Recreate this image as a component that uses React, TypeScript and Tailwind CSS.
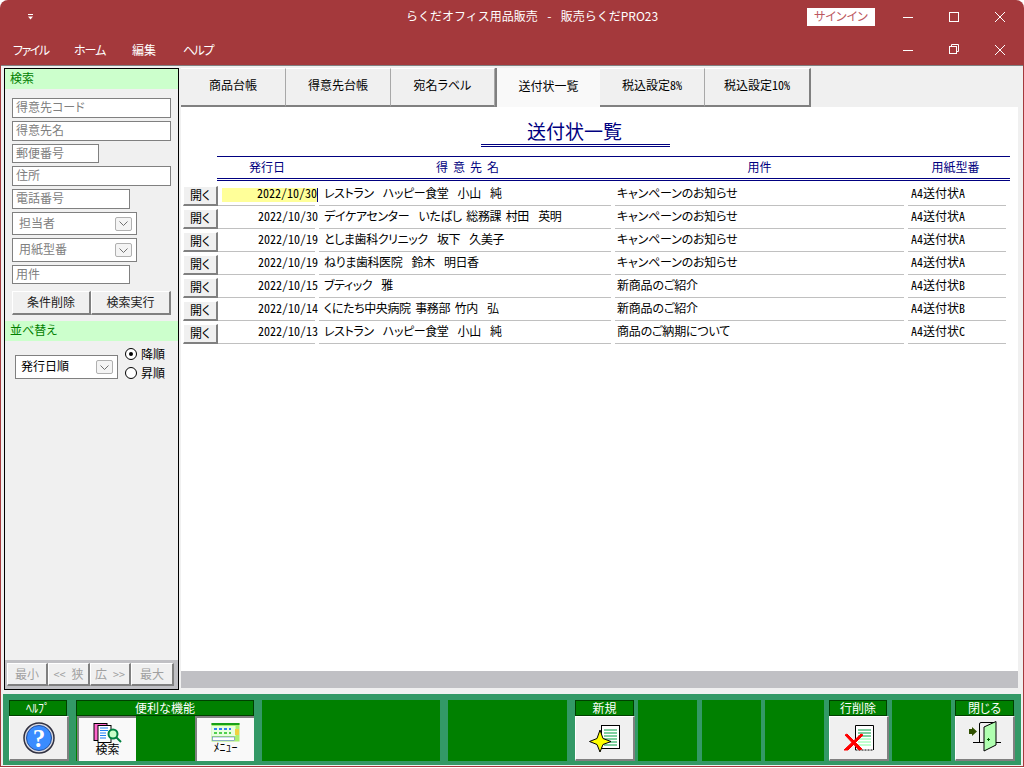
import React from "react";

const rows = [
  { date: "2022/10/30", name: "レストラン  ハッピー食堂  小山  純", subject: "キャンペーンのお知らせ", paper: "A4送付状A" },
  { date: "2022/10/30", name: "デイケアセンター  いたばし 総務課 村田  英明", subject: "キャンペーンのお知らせ", paper: "A4送付状A" },
  { date: "2022/10/19", name: "としま歯科クリニック  坂下  久美子", subject: "キャンペーンのお知らせ", paper: "A4送付状A" },
  { date: "2022/10/19", name: "ねりま歯科医院  鈴木  明日香", subject: "キャンペーンのお知らせ", paper: "A4送付状A" },
  { date: "2022/10/15", name: "ブティック  雅", subject: "新商品のご紹介", paper: "A4送付状B" },
  { date: "2022/10/14", name: "くにたち中央病院 事務部 竹内  弘", subject: "新商品のご紹介", paper: "A4送付状B" },
  { date: "2022/10/13", name: "レストラン  ハッピー食堂  小山  純", subject: "商品のご納期について", paper: "A4送付状C" },
];

const tabs = [
  { label: "商品台帳", width: "w-[105px]" },
  { label: "得意先台帳", width: "w-[105px]" },
  { label: "宛名ラベル", width: "w-[104px]" },
  { label: "送付状一覧", width: "w-[105px]", active: true },
  { label: "税込設定8%", width: "w-[105px]" },
  { label: "税込設定10%", width: "w-[106px]", last: true },
];

const bevel = "bg-[#f0f0f0] border-t border-l border-t-white border-l-white border-r-2 border-b-2 border-r-[#808080] border-b-[#808080]";

const TextField = ({ label, width, h = "h-[20px]", mt = "mt-[3px]" }: { label: string; width: string; h?: string; mt?: string }) => (
  <div className={`${width} ${h} ${mt} bg-white border border-[#808080] pl-[3px] text-[12px] leading-[16px] text-[#808080]`}>{label}</div>
);

const Chevron = () => (
  <span className="flex h-[14px] w-[17px] items-center justify-center rounded-[2px] border border-[#b0b0b0] bg-[#f4f4f4]">
    <svg width="9" height="5" viewBox="0 0 9 5" fill="none" stroke="#707070">
      <path d="M0.5 0.5 L4.5 4.5 L8.5 0.5" />
    </svg>
  </span>
);

const Combo = ({ label, h }: { label: string; h: string }) => (
  <div className={`mt-[3px] flex ${h} w-[125px] items-center justify-between border border-[#808080] bg-white pl-[6px] pr-[4px] text-[12px] text-[#808080]`}>
    <span className="pb-[2px]">{label}</span>
    <Chevron />
  </div>
);

const WinButtons = ({ restored }: { restored?: boolean }) => (
  <div className="flex items-center">
    <svg width="46" height="12" viewBox="0 0 46 12" stroke="#fff" fill="none"><path d="M20 6.5 H30" /></svg>
    <svg width="46" height="12" viewBox="0 0 46 12" stroke="#fff" fill="none">
      {restored ? (
        <>
          <rect x="20.5" y="2.5" width="7" height="7" />
          <path d="M22.5 2.5 V0.5 H29.5 V7.5 H27.5" />
        </>
      ) : (
        <rect x="20.5" y="1.5" width="9" height="9" />
      )}
    </svg>
    <svg width="46" height="12" viewBox="0 0 46 12" stroke="#fff" fill="none"><path d="M20 1 L30 11 M30 1 L20 11" /></svg>
  </div>
);

const HelpIcon = () => (
  <svg width="32" height="32" viewBox="0 0 32 32">
    <circle cx="16" cy="16" r="15" fill="#d8d8e0" stroke="#303040" strokeWidth="1.5" />
    <circle cx="16" cy="16" r="12.5" fill="#3a8cff" stroke="#2050a0" />
    <text x="16" y="25" textAnchor="middle" fontSize="25" fontWeight="700" fill="#fff" fontFamily="Liberation Serif, serif">?</text>
  </svg>
);

const SearchIcon = () => (
  <svg width="30" height="21" viewBox="0 0 30 21">
    <rect x="1" y="0.5" width="13" height="17" fill="#ff66cc" stroke="#000" />
    <rect x="5" y="2.5" width="13" height="17" fill="#fff" stroke="#000" />
    <path d="M7 5 H15 M7 7.5 H15 M7 10 H13 M7 12.5 H13 M7 15 H13" stroke="#2080f0" strokeWidth="1.2" />
    <circle cx="20" cy="11" r="4.5" fill="#c8ffc8" stroke="#008040" strokeWidth="2" />
    <path d="M23.5 14.5 L28 19" stroke="#008040" strokeWidth="2" />
  </svg>
);

const MenuIcon = () => (
  <svg width="29" height="19" viewBox="0 0 29 19">
    <rect x="0.5" y="0" width="28" height="18.5" fill="#a8f070" />
    <rect x="0.5" y="0" width="28" height="2" fill="#18a018" />
    <rect x="0.5" y="3" width="24" height="10" fill="#e8ffe0" />
    <path d="M3 6 H20" stroke="#3080f0" strokeWidth="2" strokeDasharray="3 2" />
    <path d="M3 10 H20" stroke="#50d050" strokeWidth="2" strokeDasharray="3 2" />
    <rect x="24" y="6" width="4" height="6" fill="#f0d040" />
    <rect x="1.5" y="14" width="22" height="3.5" fill="#fff" stroke="#4060d0" strokeWidth="0.5" />
  </svg>
);

const NewIcon = () => (
  <svg width="32" height="27" viewBox="0 0 32 27">
    <rect x="12.5" y="0.5" width="18" height="23" fill="#fff" stroke="#000" />
    <path d="M15 5 H28 M15 8 H28 M15 11 H28 M15 14 H28 M15 17 H28 M15 20 H28" stroke="#00a040" strokeWidth="1" />
    <path d="M11 5 L14 13.5 L22 16.5 L14 19.5 L11 27 L8 19.5 L0.5 16.5 L8 13.5 Z" fill="#ffff00" stroke="#000" />
  </svg>
);

const DeleteIcon = () => (
  <svg width="32" height="26" viewBox="0 0 32 26">
    <path d="M12.5 25 V0.5 H30.5 V25" fill="#fff" stroke="#000" />
    <path d="M12.5 25 H30.5" stroke="#000" strokeDasharray="2 1" />
    <path d="M15 5 H28 M15 8 H28 M15 11 H28" stroke="#00a040" />
    <path d="M15 14 H28 M15 17 H28 M15 20 H28" stroke="#80ffa0" />
    <path d="M1 25 L18 9 L20 10 L5 25 Z M4 9 L19 24 L16 25 L2 10 Z" fill="#ff0000" stroke="#ff0000" />
  </svg>
);

const ExitIcon = () => (
  <svg className="-mt-[3px]" width="33" height="31" viewBox="0 0 33 31">
    <path d="M1 8 H4 V6 L9 10.5 L4 15 V13 H1 Z" fill="#305000" />
    <path d="M5 21.5 H33" stroke="#000" />
    <path d="M11.5 21 V3 Q11.5 1.5 13 1.5 H27" fill="none" stroke="#000" />
    <path d="M16 6 L28 0.5 V24 L16 30 Z" fill="#b0ffb0" stroke="#000" />
    <path d="M19 18.5 H22 M20.5 17 V20" stroke="#006000" />
  </svg>
);

const Cell = ({ width, mr, title, children }: { width: string; mr: string; title?: string; children?: React.ReactNode }) => (
  <div className={`${width} ${mr} flex h-[61px] flex-col bg-[#008000]`}>
    {title && (
      <div className="h-[16px] shrink-0 border border-[#004000] text-center text-[12px] leading-[13px] text-white">{title}</div>
    )}
    {children}
  </div>
);

const ActionButton = ({ children }: { children: React.ReactNode }) => (
  <div className={`${bevel} flex h-[46px] w-[60px] items-center justify-center`}>{children}</div>
);

const FeatureButton = ({ label, children }: { label: string; children: React.ReactNode }) => (
  <div className="flex h-[45px] w-[59px] flex-col items-center border-t-2 border-l-2 border-t-[#808080] border-l-[#808080] bg-[#f9f9f9] pt-[5px]">
    {children}
    <span className="-mt-[1px] text-[12px] leading-[12px] text-black">{label}</span>
  </div>
);

export default function App() {
  return (
    <div className="flex h-[768px] w-[1024px] flex-col overflow-hidden bg-white font-['Noto_Sans_CJK_JP',sans-serif] [font-feature-settings:'hwid','palt'] text-black">
      <div className="flex h-[767px] flex-col rounded-t-[8px] bg-[#a4393c] px-[1px] pb-[1px]">
        <div className="flex h-[33px] shrink-0 items-center text-[12px] text-white">
          <svg className="ml-[27px]" width="6" height="6" viewBox="0 0 6 6" fill="#fff">
            <rect x="0" y="0" width="5" height="1" />
            <path d="M0 2.5 H5 L2.5 5.5 Z" />
          </svg>
          <span className="ml-[372px] w-[401px] whitespace-pre pb-[1px] [font-feature-settings:normal] [word-spacing:2px]">らくだオフィス用品販売  -  販売らくだPRO23</span>
          <span className="flex h-[18px] w-[68px] items-center justify-center bg-white pb-[1px] text-[12px] text-[#bc5860]">サインイン</span>
          <div className="ml-[8px]"><WinButtons /></div>
        </div>
        <div className="flex h-[32px] shrink-0 items-center pt-[1px] text-[12px] text-white">
          <span className="ml-[12px] w-[61px] tracking-[-1.5px]">ファイル</span>
          <span className="w-[58px] tracking-[-1px]">ホーム</span>
          <span className="w-[51px]">編集</span>
          <span className="w-[700px] tracking-[-1.5px]">ヘルプ</span>
          <WinButtons restored />
        </div>
        <div className="flex min-h-0 flex-1 flex-col border-t border-t-[#808080] bg-[#f0f0f0] pl-[2px] pr-[2px]">
          <div className="mt-[2px] flex h-[622px] shrink-0">
            {/* left search panel */}
            <div className="ml-[1px] flex h-[622px] w-[175px] shrink-0 flex-col border border-black bg-[#f0f0f0]">
              <div className="h-[20px] bg-[#ccffcc] pl-[5px] text-[12px] leading-[17px] text-[#008000]">検索</div>
              <div className="flex flex-col pl-[7px]">
                <TextField label="得意先コード" width="w-[159px]" mt="mt-[9px]" />
                <TextField label="得意先名" width="w-[159px]" />
                <TextField label="郵便番号" width="w-[87px]" h="h-[19px]" />
                <TextField label="住所" width="w-[159px]" />
                <TextField label="電話番号" width="w-[118px]" />
                <Combo label="担当者" h="h-[23px]" />
                <Combo label="用紙型番" h="h-[24px]" />
                <TextField label="用件" width="w-[118px]" h="h-[19px]" />
                <div className="mt-[7px] flex text-[12px] text-[#202020]">
                  <div className={`${bevel} flex h-[24px] w-[79px] items-center justify-center pb-[2px]`}>条件削除</div>
                  <div className={`${bevel} flex h-[24px] w-[80px] items-center justify-center pb-[2px]`}>検索実行</div>
                </div>
              </div>
              <div className="mt-[6px] h-[20px] bg-[#ccffcc] pl-[5px] text-[12px] leading-[17px] text-[#008000]">並べ替え</div>
              <div className="flex pl-[10px] pt-[5px]">
                <div className="mt-[9px] flex h-[24px] w-[103px] items-center justify-between border border-[#808080] bg-white pl-[5px] pr-[4px] text-[12px] text-black">
                  <span className="pb-[2px]">発行日順</span>
                  <Chevron />
                </div>
                <div className="ml-[7px] flex flex-col gap-[3px] text-[12px] leading-[16px]">
                  <div className="flex items-center gap-[4px]">
                    <span className="flex h-[12px] w-[12px] items-center justify-center rounded-full border border-black bg-white">
                      <span className="h-[4px] w-[4px] rounded-full bg-black" />
                    </span>
                    降順
                  </div>
                  <div className="flex items-center gap-[4px]">
                    <span className="h-[12px] w-[12px] rounded-full border border-black bg-white" />
                    昇順
                  </div>
                </div>
              </div>
              <div className="mt-auto flex h-[29px] bg-[#c0c0c4] px-[2px] pt-[3px] text-[12px] text-[#a0a0a0]">
                <div className={`${bevel} flex h-[23px] w-[41px] items-center justify-center pb-[1px]`}>最小</div>
                <div className={`${bevel} flex h-[23px] w-[42px] items-center justify-center pb-[1px]`}>&lt;&lt; 狭</div>
                <div className={`${bevel} flex h-[23px] w-[41px] items-center justify-center pb-[1px]`}>広 &gt;&gt;</div>
                <div className={`${bevel} flex h-[23px] w-[43px] items-center justify-center pb-[1px]`}>最大</div>
              </div>
            </div>

            {/* right side */}
            <div className="ml-[2px] flex h-[620px] w-[837px] shrink-0 flex-col">
              <div className="flex h-[39px] shrink-0">
                {tabs.map((t) => (
                  <div
                    key={t.label}
                    className={
                      t.active
                        ? `${t.width} flex items-center justify-center border-l-2 border-l-[#808080] bg-[#f9f9f9] pb-[3px] text-[12px]`
                        : `${t.width} flex items-center justify-center border-t border-t-white border-b-2 border-b-[#808080] pb-[5px] text-[12px] ${t.last ? "border-r-2 border-r-[#808080]" : "border-r border-r-[#a8a8a8]"}`
                    }
                  >
                    {t.label}
                  </div>
                ))}
              </div>
              <div className="flex min-h-0 flex-1 flex-col bg-white">
                <div className="ml-[300px] mt-[13px] h-[27px] w-[189px] border-b-[3px] border-double border-b-[#000080] pr-[2px] text-center text-[19px] leading-[22px] text-[#000080]">
                  送付状一覧
                </div>
                <div className="ml-[36px] mt-[9px] flex h-[25px] w-[793px] items-center border-t border-t-[#000080] border-b-[3px] border-double border-b-[#000080] pb-[2px] text-[12px] text-[#000080]">
                  <span className="w-[100px] text-center">発行日</span>
                  <span className="w-[301px] whitespace-pre text-center [word-spacing:-1px]">得 意 先 名</span>
                  <span className="w-[283px] text-center">用件</span>
                  <span className="w-[109px] text-center">用紙型番</span>
                </div>
                <div className="mt-[3px] flex flex-col pl-[2px]">
                  {rows.map((r, i) => (
                    <div key={i} className="flex h-[23px] text-[12px] leading-[15px]">
                      <div className={`${bevel} mt-[2px] flex h-[20px] w-[35px] items-center justify-center pb-[3px]`}>開く</div>
                      <div className="h-[22px] w-[97px] border-b border-b-[#c0c0c0]">
                        <div className={`ml-[4px] -mr-[3px] mt-[4px] h-[14px] text-right leading-[10px] ${i === 0 ? "bg-[#ffff99] border-r border-r-[#000080]" : ""}`}>{r.date}</div>
                      </div>
                      <div className="ml-[4px] h-[22px] w-[292px] whitespace-pre border-b border-b-[#c0c0c0] pl-[5px] pt-[1px] tracking-[-0.4px] [word-spacing:-1px]">{r.name}</div>
                      <div className="ml-[4px] h-[22px] w-[289px] border-b border-b-[#c0c0c0] pl-[2px] pt-[1px] tracking-[-0.2px]">{r.subject}</div>
                      <div className="ml-[4px] h-[22px] w-[98px] border-b border-b-[#c0c0c0] pl-[3px] pt-[1px]">{r.paper}</div>
                    </div>
                  ))}
                </div>
              </div>
              <div className="h-[17px] shrink-0 bg-[#c0c0c4]" />
            </div>
          </div>

          {/* bottom toolbar */}
          <div className="mt-[4px] flex h-[71px] shrink-0 bg-[#339966] pl-[6px] pt-[6px]">
            <Cell width="w-[58px]" mr="mr-[9px]" title="ﾍﾙﾌﾟ">
              <ActionButton><HelpIcon /></ActionButton>
            </Cell>
            <Cell width="w-[178px]" mr="mr-[8px]" title="便利な機能">
              <div className="flex justify-between pl-[1px]">
                <FeatureButton label="検索"><SearchIcon /></FeatureButton>
                <FeatureButton label="ﾒﾆｭｰ"><MenuIcon /></FeatureButton>
              </div>
            </Cell>
            <Cell width="w-[178px]" mr="mr-[8px]" />
            <Cell width="w-[119px]" mr="mr-[8px]" />
            <Cell width="w-[59px]" mr="mr-[4px]" title="新規">
              <ActionButton><NewIcon /></ActionButton>
            </Cell>
            <Cell width="w-[59px]" mr="mr-[5px]" />
            <Cell width="w-[59px]" mr="mr-[4px]" />
            <Cell width="w-[59px]" mr="mr-[5px]" />
            <Cell width="w-[58px]" mr="mr-[5px]" title="行削除">
              <ActionButton><DeleteIcon /></ActionButton>
            </Cell>
            <Cell width="w-[59px]" mr="mr-[4px]" />
            <Cell width="w-[59px]" mr="mr-0" title="閉じる">
              <ActionButton><ExitIcon /></ActionButton>
            </Cell>
          </div>
        </div>
      </div>
    </div>
  );
}
